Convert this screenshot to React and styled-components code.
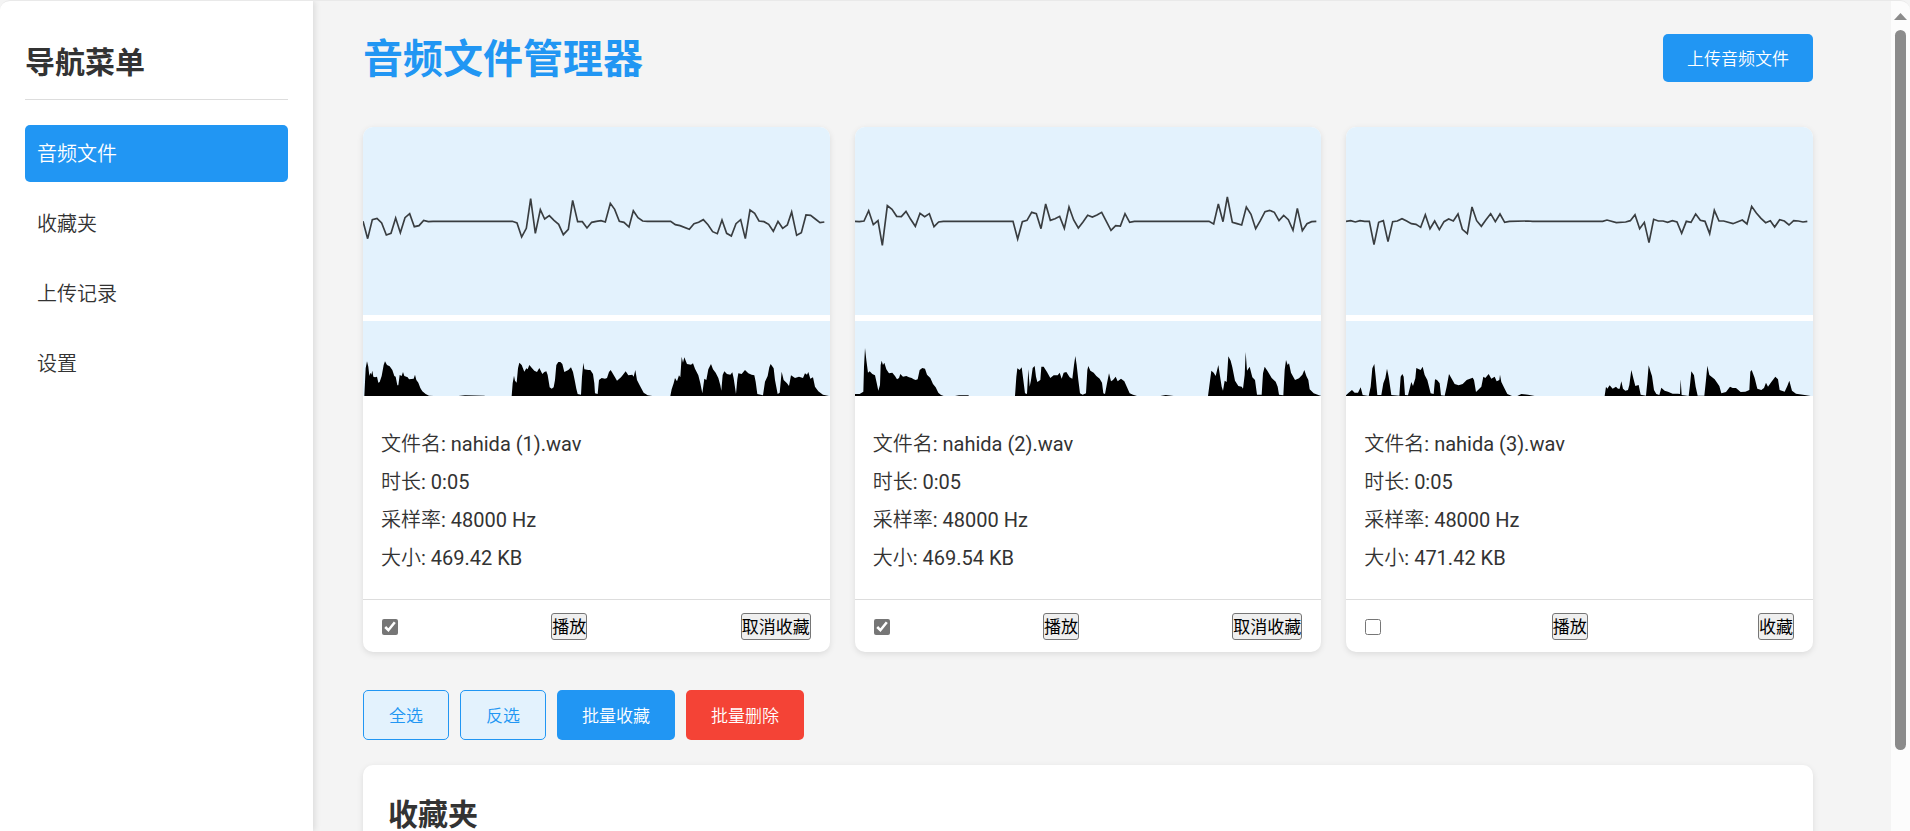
import React, { useState } from "react";
import styled, { createGlobalStyle, css } from "styled-components";

const bodyFont = `Roboto, "Noto Sans CJK SC DemiLight", "Noto Sans CJK SC", sans-serif`;
const headingFont = `Roboto, "Noto Sans CJK SC", sans-serif`;

const GlobalStyle = createGlobalStyle`
  *, *::before, *::after { box-sizing: border-box; margin: 0; padding: 0; }
  body {
    background: #f4f4f4;
    color: #333;
    font: 20px/32px ${bodyFont};
  }
  button { font: 17px/24px ${bodyFont}; }
`;

const Frame = styled.div`
  display: flex;
  height: 100vh;
  overflow: hidden;
  background: #f4f4f4;
  border-top: 1px solid #e9e9e9;
  border-radius: 10px 10px 0 0;
`;

const Sidebar = styled.aside`
  flex: none;
  width: 313px;
  padding: 38px 25px 25px;
  background: #fff;
  box-shadow: 2px 0 6px rgba(0, 0, 0, 0.1);
  z-index: 1;
`;

const Heading = styled.h2`
  font-family: ${headingFont};
  font-size: 30px;
  line-height: 48px;
  font-weight: 700;
`;

const SidebarHeading = styled(Heading)`
  padding-bottom: 12px;
  margin-bottom: 25px;
  border-bottom: 1px solid #ddd;
`;

const NavList = styled.ul`
  display: grid;
  gap: 13px;
  list-style: none;
`;

const NavLink = styled.a`
  display: block;
  padding: 13px 12px 12px;
  border-radius: 5px;
  color: ${(p) => (p.$active ? "#fff" : "#333")};
  background: ${(p) => (p.$active ? "#2196f3" : "transparent")};
  text-decoration: none;
`;

const Main = styled.main`
  flex: 1;
  min-width: 0;
  padding: 25px;
  overflow-y: auto;
  scrollbar-width: none;
`;

const Container = styled.div`
  max-width: 1500px;
  padding: 0 25px 25px;
`;

const Header = styled.header`
  display: flex;
  justify-content: space-between;
  align-items: center;
  margin-bottom: 37px;
`;

const Title = styled.h1`
  padding-top: 4px;
  font-family: ${headingFont};
  font-size: 40px;
  line-height: 60px;
  font-weight: 700;
  color: #2196f3;
`;

const tones = {
  primary: css`
    color: #fff;
    background: #2196f3;
  `,
  danger: css`
    color: #fff;
    background: #f44336;
  `,
  outline: css`
    color: #2196f3;
    background: #e3f2fd;
    border: 1px solid #2196f3;
  `,
};

const Button = styled.button`
  padding: 13px 24px 11px;
  border: 0;
  border-radius: 5px;
  cursor: pointer;
  ${(p) => tones[p.$tone]}
`;

const ActionButton = styled(Button)`
  padding: 13px 25px 11px;
`;

const CardGrid = styled.section`
  display: grid;
  grid-template-columns: repeat(3, minmax(0, 1fr));
  gap: 25px;
  margin-bottom: 38px;
`;

const Card = styled.article`
  overflow: hidden;
  border-radius: 10px;
  background: #fff;
  box-shadow: 0 2px 6px rgba(0, 0, 0, 0.1);
`;

const Plot = styled.svg`
  display: block;
  width: 100%;
  height: ${(p) => p.$height}px;
  margin-bottom: ${(p) => p.$gap || 0}px;
  background: #e3f2fd;
`;

const Info = styled.div`
  display: grid;
  gap: 6px;
  padding: 32px 18px 25px;
`;

const CardFooter = styled.footer`
  display: flex;
  justify-content: space-between;
  align-items: center;
  padding: 13px 19px 12px;
  border-top: 1px solid #ddd;
`;

const Check = styled.input`
  width: 16px;
  height: 16px;
  accent-color: #767676;
`;

const SmallButton = styled.button`
  height: 27px;
  border: 1px solid #767676;
  border-radius: 3px;
  background: #efefef;
  color: #000;
  font-family: ${headingFont};
`;

const Actions = styled.div`
  display: flex;
  gap: 11px;
  margin-bottom: 25px;
`;

const Favorites = styled.section`
  padding: 26px 25px 25px;
  min-height: 240px;
  border-radius: 10px;
  background: #fff;
  box-shadow: 0 2px 6px rgba(0, 0, 0, 0.1);
`;

const ScrollRail = styled.div`
  flex: none;
  display: flex;
  flex-direction: column;
  align-items: center;
  gap: 10px;
  width: 19px;
  padding-top: 12px;
  background: #fcfcfc;
`;

const Arrow = styled.svg`
  flex: none;
  width: 13px;
  height: 7px;
  fill: #8b8b8b;
`;

const Thumb = styled.div`
  flex: none;
  width: 11px;
  height: 88%;
  border-radius: 6px;
  background: #8b8b8b;
`;

const FILES = [
  {
    name: "nahida (1).wav",
    rate: "48000 Hz",
    size: "469.42 KB",
    favorite: true,
    x: 24,
    wave: "24,304 38,356 52,299 66,295 80,309 94,345 108,340 122,294 136,338 150,293 164,281 178,320 192,317 206,301 220,305 234,304 472,304 486,309 500,351 514,325 527,236 541,340 556,269 569,297 583,287 597,301 611,313 625,344 640,328 653,241 668,305 682,305 696,324 710,307 724,304 738,302 751,306 766,250 779,268 793,304 807,307 822,321 835,272 849,293 863,303 877,304 947,304 961,314 975,317 1003,328 1017,311 1031,307 1045,299 1059,314 1073,335 1087,341 1101,300 1115,340 1129,348 1143,311 1157,299 1171,356 1185,270 1199,280 1212,303 1227,305 1241,313 1255,334 1269,304 1283,325 1297,315 1310,276 1325,346 1339,338 1353,285 1367,286 1381,297 1395,308 1408,306",
    spectrum: "28,828 32,745 36,724 40,740 43,768 46,758 49,764 52,752 55,770 60,772 66,770 70,788 74,786 80,768 86,735 90,724 96,735 104,739 112,750 118,768 122,770 127,796 130,796 134,765 140,768 144,756 148,768 158,772 162,778 176,776 180,764 184,780 190,788 196,804 202,814 212,822 222,827 236,828 310,828 330,826 388,827 390,828 470,828 473,790 477,767 480,782 485,788 489,745 493,728 500,735 508,755 514,745 518,748 523,735 530,743 538,752 546,756 553,744 562,762 568,756 574,754 578,765 584,802 590,806 596,802 600,780 604,735 610,726 616,726 622,732 628,756 640,750 648,742 654,756 659,780 664,806 668,822 678,824 681,770 685,728 688,748 700,750 706,750 714,762 718,790 720,820 728,822 732,780 740,774 750,776 756,774 762,756 767,750 772,758 780,772 786,782 798,772 804,764 812,754 820,766 832,764 836,770 841,750 846,780 854,796 866,818 878,826 892,828 946,828 950,808 956,790 960,774 966,784 972,766 976,772 980,710 984,728 988,712 996,732 1008,734 1014,730 1020,746 1030,766 1036,790 1042,820 1048,776 1054,780 1060,748 1068,732 1074,748 1082,758 1090,774 1096,796 1099,812 1103,765 1108,754 1116,762 1126,764 1132,757 1136,775 1143,822 1147,778 1150,760 1160,762 1170,750 1180,760 1190,764 1198,766 1202,785 1207,822 1224,826 1230,785 1238,768 1243,742 1247,732 1256,745 1260,780 1268,822 1274,818 1280,755 1286,780 1296,790 1302,798 1308,766 1320,774 1332,770 1344,774 1350,760 1356,764 1360,756 1366,776 1374,772 1380,800 1390,814 1404,824 1422,828",
  },
  {
    name: "nahida (2).wav",
    rate: "48000 Hz",
    size: "469.54 KB",
    favorite: true,
    x: 28,
    wave: "27,304 41,305 55,303 69,272 83,314 97,302 110,376 125,257 139,268 153,289 167,290 181,274 195,298 209,319 223,280 237,290 251,281 265,320 279,306 293,304 502,304 516,357 530,305 544,301 558,277 572,281 586,326 600,252 614,301 628,296 642,289 656,325 670,261 684,300 698,324 712,306 726,286 740,291 754,285 768,277 782,304 796,331 810,317 824,318 838,281 852,307 866,304 1090,304 1104,312 1118,252 1132,305 1145,231 1160,307 1174,311 1188,315 1202,261 1216,283 1230,326 1244,302 1258,275 1272,271 1286,277 1300,302 1314,286 1328,299 1342,331 1355,265 1370,332 1384,311 1398,305 1412,304",
    spectrum: "27,822 42,822 48,818 53,815 55,740 58,684 62,720 67,758 72,754 80,762 88,766 93,788 98,812 103,795 105,735 108,722 112,735 116,728 122,748 130,760 140,758 148,768 154,778 160,774 164,762 172,770 182,768 190,772 198,774 204,778 210,780 216,778 222,750 230,744 238,746 244,764 254,774 262,792 270,802 278,818 286,825 294,828 328,828 340,826 368,826 370,828 508,828 512,770 515,745 522,750 528,742 533,780 538,820 544,822 548,748 552,800 556,780 561,744 567,738 571,770 575,786 584,780 587,740 594,740 604,756 614,774 624,766 636,766 642,758 648,776 654,758 662,756 672,772 680,776 685,735 689,708 693,735 698,780 703,820 711,824 721,820 725,750 728,738 734,752 744,758 752,768 762,776 769,788 773,820 778,822 784,790 790,760 796,784 802,780 810,770 816,784 826,776 836,784 844,802 852,820 862,824 874,828 944,828 960,825 984,828 1087,828 1092,790 1097,752 1104,758 1110,768 1118,735 1124,775 1128,800 1132,812 1137,782 1143,786 1148,709 1155,722 1160,742 1168,782 1178,798 1188,800 1192,806 1197,765 1200,696 1204,752 1212,740 1220,772 1228,780 1234,824 1248,824 1252,760 1257,740 1266,754 1278,774 1290,785 1296,800 1300,824 1313,826 1317,750 1321,720 1326,735 1330,730 1336,758 1348,780 1360,775 1370,764 1376,750 1382,768 1388,780 1392,808 1404,820 1424,827 1428,828",
  },
  {
    name: "nahida (3).wav",
    rate: "48000 Hz",
    size: "471.42 KB",
    favorite: false,
    x: 24,
    wave: "24,304 38,302 52,306 66,302 80,304 94,304 108,374 122,307 136,302 150,365 164,305 178,303 192,296 206,303 220,311 234,313 248,322 262,284 276,326 290,303 304,329 318,305 332,297 346,303 360,282 373,328 388,341 402,261 416,302 430,319 444,299 458,281 472,305 486,282 500,307 514,304 570,303 584,304 794,304 807,300 835,308 863,306 877,302 891,284 905,326 919,307 933,368 947,298 961,303 975,303 989,307 1003,302 1017,306 1031,340 1045,304 1059,307 1073,282 1087,301 1101,304 1115,341 1129,271 1143,303 1157,303 1185,311 1213,300 1227,312 1241,259 1255,279 1269,295 1283,308 1297,302 1310,321 1325,299 1339,303 1353,315 1367,302 1381,303 1395,306 1408,304",
    spectrum: "24,826 32,818 42,810 50,818 60,818 68,802 74,825 92,828 98,800 103,745 109,732 113,770 118,825 130,825 136,790 142,774 147,746 152,770 160,825 184,827 188,770 193,762 197,770 201,825 210,826 220,786 225,798 232,775 235,744 248,750 254,740 260,765 268,780 278,820 287,822 291,778 297,780 305,790 309,826 320,827 326,800 333,762 342,778 350,792 362,796 374,792 386,780 404,773 408,780 414,816 424,806 430,800 436,770 442,774 452,762 460,776 470,770 476,784 484,780 486,764 490,786 500,806 508,822 522,828 538,828 550,822 570,824 590,828 800,828 804,800 808,806 815,796 824,806 834,800 840,806 845,806 850,784 855,806 862,812 870,810 874,795 880,750 886,775 892,798 902,795 908,824 924,827 928,785 932,736 938,756 942,768 948,810 955,822 964,825 970,803 980,812 990,815 1004,821 1020,821 1026,822 1028,778 1031,825 1052,828 1056,795 1060,754 1068,766 1073,800 1079,827 1099,827 1104,780 1108,737 1114,765 1130,778 1144,798 1150,820 1164,816 1176,800 1184,804 1194,804 1208,816 1222,815 1234,810 1237,755 1241,750 1250,774 1258,806 1270,810 1278,804 1284,788 1290,800 1300,786 1312,770 1320,778 1325,810 1340,815 1348,798 1354,782 1362,812 1374,821 1400,825 1418,828",
  },
];

const NAV = ["音频文件", "收藏夹", "上传记录", "设置"];

function FileCard({ file, checked, onCheck, onFavorite }) {
  return (
    <Card>
      <Plot $height={188} $gap={6} viewBox={`${file.x} 21 1400 564`} preserveAspectRatio="none" aria-hidden="true">
        <polyline points={file.wave} fill="none" stroke="#000" strokeOpacity="0.75" strokeWidth="5" />
      </Plot>
      <Plot $height={75} viewBox={`${file.x} 603 1400 225`} preserveAspectRatio="none" aria-hidden="true">
        <polygon points={`${file.x},828 ${file.spectrum}`} />
      </Plot>
      <Info>
        <p>文件名: {file.name}</p>
        <p>时长: 0:05</p>
        <p>采样率: {file.rate}</p>
        <p>大小: {file.size}</p>
      </Info>
      <CardFooter>
        <Check type="checkbox" aria-label={file.name} checked={checked} onChange={onCheck} />
        <SmallButton type="button">播放</SmallButton>
        <SmallButton type="button" onClick={onFavorite}>
          {file.favorite ? "取消收藏" : "收藏"}
        </SmallButton>
      </CardFooter>
    </Card>
  );
}

export default function App() {
  const [files, setFiles] = useState(FILES);
  const [selected, setSelected] = useState([true, true, false]);
  const toggle = (i) => setSelected((s) => s.map((v, j) => (i === j ? !v : v)));
  const toggleFavorite = (i) =>
    setFiles((fs) => fs.map((f, j) => (i === j ? { ...f, favorite: !f.favorite } : f)));
  const favoriteSelected = () =>
    setFiles((fs) => fs.map((f, j) => (selected[j] ? { ...f, favorite: true } : f)));
  const deleteSelected = () => {
    setFiles((fs) => fs.filter((_, j) => !selected[j]));
    setSelected((s) => s.filter((v) => !v));
  };

  return (
    <>
      <GlobalStyle />
      <Frame>
        <Sidebar>
          <SidebarHeading>导航菜单</SidebarHeading>
          <nav>
            <NavList>
              {NAV.map((label, i) => (
                <li key={label}>
                  <NavLink href="#" $active={i === 0}>{label}</NavLink>
                </li>
              ))}
            </NavList>
          </nav>
        </Sidebar>
        <Main>
          <Container>
            <Header>
              <Title>音频文件管理器</Title>
              <Button type="button" $tone="primary">上传音频文件</Button>
            </Header>
            <CardGrid>
              {files.map((file, i) => (
                <FileCard
                  key={file.name}
                  file={file}
                  checked={selected[i]}
                  onCheck={() => toggle(i)}
                  onFavorite={() => toggleFavorite(i)}
                />
              ))}
            </CardGrid>
            <Actions>
              <ActionButton type="button" $tone="outline" onClick={() => setSelected((s) => s.map(() => true))}>全选</ActionButton>
              <ActionButton type="button" $tone="outline" onClick={() => setSelected((s) => s.map((v) => !v))}>反选</ActionButton>
              <ActionButton type="button" $tone="primary" onClick={favoriteSelected}>批量收藏</ActionButton>
              <ActionButton type="button" $tone="danger" onClick={deleteSelected}>批量删除</ActionButton>
            </Actions>
            <Favorites>
              <Heading>收藏夹</Heading>
            </Favorites>
          </Container>
        </Main>
        <ScrollRail aria-hidden="true">
          <Arrow viewBox="0 0 13 7"><path d="M0 7 6.5 0 13 7Z" /></Arrow>
          <Thumb />
        </ScrollRail>
      </Frame>
    </>
  );
}
